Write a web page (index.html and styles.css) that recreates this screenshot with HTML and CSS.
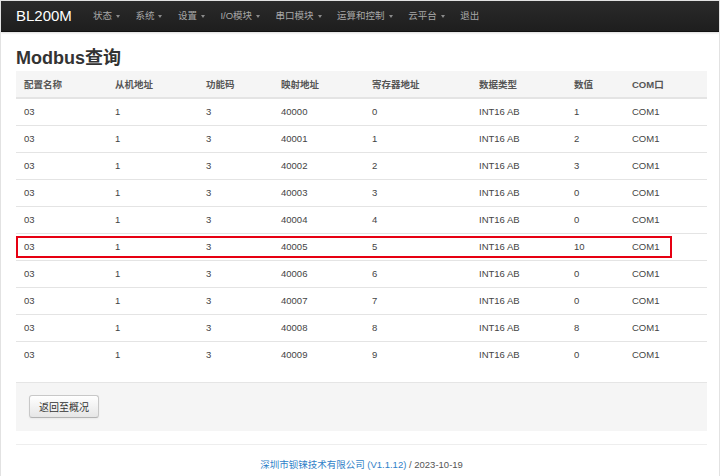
FILE: index.html
```html
<!DOCTYPE html>
<html lang="zh-CN">
<head>
<meta charset="utf-8">
<title>Modbus查询</title>
<link rel="stylesheet" href="styles.css">
</head>
<body>
<div class="navbar">
  <span class="brand">BL200M</span>
  <ul class="nav">
    <li>状态<b class="caret"></b></li>
    <li>系统<b class="caret"></b></li>
    <li>设置<b class="caret"></b></li>
    <li>I/O模块<b class="caret"></b></li>
    <li>串口模块<b class="caret"></b></li>
    <li>运算和控制<b class="caret"></b></li>
    <li>云平台<b class="caret"></b></li>
    <li>退出</li>
  </ul>
</div>
<div class="container">
  <h2 class="title">Modbus查询</h2>
  <div class="table-wrap">
    <table class="data">
      <colgroup>
        <col class="c1"><col class="c2"><col class="c3"><col class="c4"><col class="c5"><col class="c6"><col class="c7"><col class="c8">
      </colgroup>
      <thead>
        <tr><th>配置名称</th><th>从机地址</th><th>功能码</th><th>映射地址</th><th>寄存器地址</th><th>数据类型</th><th>数值</th><th>COM口</th></tr>
      </thead>
      <tbody>
        <tr><td>03</td><td>1</td><td>3</td><td>40000</td><td>0</td><td>INT16 AB</td><td>1</td><td>COM1</td></tr>
        <tr><td>03</td><td>1</td><td>3</td><td>40001</td><td>1</td><td>INT16 AB</td><td>2</td><td>COM1</td></tr>
        <tr><td>03</td><td>1</td><td>3</td><td>40002</td><td>2</td><td>INT16 AB</td><td>3</td><td>COM1</td></tr>
        <tr><td>03</td><td>1</td><td>3</td><td>40003</td><td>3</td><td>INT16 AB</td><td>0</td><td>COM1</td></tr>
        <tr><td>03</td><td>1</td><td>3</td><td>40004</td><td>4</td><td>INT16 AB</td><td>0</td><td>COM1</td></tr>
        <tr><td>03</td><td>1</td><td>3</td><td>40005</td><td>5</td><td>INT16 AB</td><td>10</td><td>COM1</td></tr>
        <tr><td>03</td><td>1</td><td>3</td><td>40006</td><td>6</td><td>INT16 AB</td><td>0</td><td>COM1</td></tr>
        <tr><td>03</td><td>1</td><td>3</td><td>40007</td><td>7</td><td>INT16 AB</td><td>0</td><td>COM1</td></tr>
        <tr><td>03</td><td>1</td><td>3</td><td>40008</td><td>8</td><td>INT16 AB</td><td>8</td><td>COM1</td></tr>
        <tr><td>03</td><td>1</td><td>3</td><td>40009</td><td>9</td><td>INT16 AB</td><td>0</td><td>COM1</td></tr>
      </tbody>
    </table>
    <div class="highlight"></div>
  </div>
  <div class="actions">
    <button class="btn" type="button">返回至概况</button>
  </div>
  <hr class="sep">
  <footer class="footer"><a class="link" href="#">深圳市钡铼技术有限公司 (V1.1.12)</a> / 2023-10-19</footer>
</div>
</body>
</html>
```
FILE: styles.css
```css
html, body {
  margin: 0;
  padding: 0;
  background: #fff;
}
body {
  font-family: "Liberation Sans", Arial, "Noto Sans CJK SC", sans-serif;
  font-size: 9.5px;
  color: #444;
  border: 1px solid #e2e2e2;
  border-bottom: none;
  box-sizing: border-box;
  min-height: 476px;
}
.navbar {
  height: 30px;
  display: flex;
  align-items: center;
  background: linear-gradient(#2a2a2a, #1e1e1e);
  border-bottom: 1px solid #111;
  box-shadow: 0 1px 2px rgba(0,0,0,0.15);
}
.brand {
  color: #fff;
  font-size: 15px;
  margin-left: 15px;
  margin-right: 21px;
  line-height: 30px;
}
.nav {
  list-style: none;
  margin: 0;
  padding: 0;
  display: flex;
  gap: 15.5px;
}
.nav li {
  color: #a8a8a8;
  display: flex;
  align-items: center;
  line-height: 30px;
}
.caret {
  display: inline-block;
  width: 0;
  height: 0;
  margin-left: 4px;
  border-top: 3px solid #8a8a8a;
  border-left: 2.5px solid transparent;
  border-right: 2.5px solid transparent;
}
.container {
  padding: 0 12px 0 15px;
}
.title {
  margin: 14px 0 1px;
  font-size: 18px;
  line-height: 24px;
  font-weight: bold;
  color: #333;
}
.table-wrap {
  position: relative;
}
.data {
  width: 100%;
  border-collapse: collapse;
  table-layout: fixed;
}
.c1 { width: 91px; }
.c2 { width: 91px; }
.c3 { width: 75px; }
.c4 { width: 91px; }
.c5 { width: 107px; }
.c6 { width: 95px; }
.c7 { width: 58px; }
.data th, .data td {
  text-align: left;
  padding: 0 8px;
  height: 26px;
  box-sizing: border-box;
  border-top: 1px solid #e4e4e4;
  white-space: nowrap;
}
.data th {
  background: #f5f5f5;
  font-weight: bold;
  color: #555;
  border-top: none;
  border-bottom: 2px solid #e4e4e4;
  height: 27px;
}
.data td {
  height: 27px;
}
.highlight {
  position: absolute;
  left: 0;
  top: 165px;
  width: 656px;
  height: 22px;
  box-sizing: border-box;
  border: 2px solid #e60012;
}
.actions {
  margin-top: 14px;
  background: #f5f5f5;
  border-top: 1px solid #e5e5e5;
  padding: 12px 13px 13px;
}
.btn {
  font-family: inherit;
  font-size: 10px;
  color: #333;
  height: 23px;
  padding: 0 9px;
  background: linear-gradient(#ffffff, #e6e6e6);
  border: 1px solid #c8c8c8;
  border-bottom-color: #b3b3b3;
  border-radius: 3px;
  box-shadow: inset 0 1px 0 rgba(255,255,255,0.2), 0 1px 2px rgba(0,0,0,0.05);
}
.sep {
  margin: 13px 0 0;
  border: 0;
  border-top: 1px solid #eee;
  border-bottom: 1px solid #fff;
}
.footer {
  text-align: center;
  margin-top: 12px;
  line-height: 14px;
  color: #555;
}
.link {
  color: #2f7fc8;
  text-decoration: none;
}
```
